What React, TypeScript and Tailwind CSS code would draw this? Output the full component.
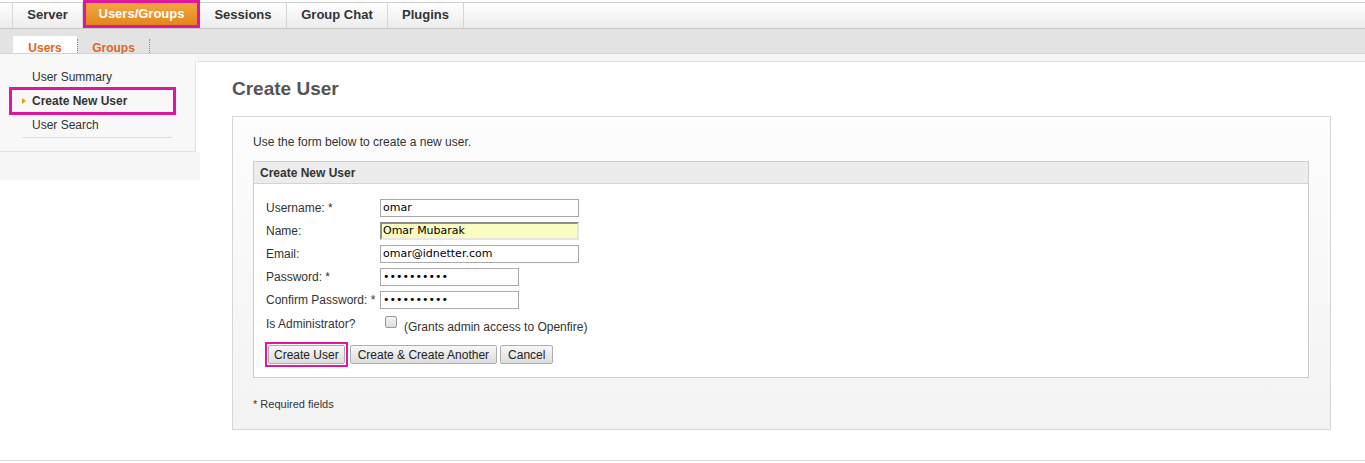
import React from 'react';

const navTabs = [
    { label: 'Server', w: 'w-[70px]' },
    { label: 'Users/Groups', w: 'w-[117px]', active: true },
    { label: 'Sessions', w: 'w-[87px]' },
    { label: 'Group Chat', w: 'w-[101px]' },
    { label: 'Plugins', w: 'w-[76px]' },
];

const FormRow: React.FC<{ label: string; children: React.ReactNode }> = ({ label, children }) => (
    <div className="flex items-center h-[23px]">
        <div className="w-[114px] text-[12px] text-[#333]">{label}</div>
        {children}
    </div>
);

const TextBox: React.FC<{ value: string; w: string; type?: string }> = ({ value, w, type = 'text' }) => (
    <input
        type={type}
        defaultValue={value}
        readOnly
        className={`${w} h-[18px] border border-[#a9a9a9] bg-white px-[2px] text-[11px] text-black outline-none`}
        style={{ fontFamily: '"DejaVu Sans", Verdana, sans-serif' }}
    />
);

const btn = 'h-[19px] text-[12px] text-[#222] border border-[#adadad] rounded-[2px] bg-gradient-to-b from-[#f7f7f7] to-[#dddddd]';

export default function App() {
    return (
        <div className="w-[1365px] h-[463px] bg-white text-[#333] overflow-hidden" style={{ fontFamily: '"Liberation Sans", Arial, sans-serif' }}>
            {/* Main tabs */}
            <div className="flex h-[29px] border-b border-[#c8c8c8]">
                <div className="w-[13px] mt-[2px] border-t border-r border-t-[#cfcfcf] border-r-[#d6d6d6] bg-gradient-to-b from-white to-[#ececec]"></div>
                {navTabs.map((t) =>
                    t.active ? (
                        <div
                            key={t.label}
                            className={`${t.w} h-[28px] flex items-center justify-center border-[3px] border-[#e0179d] bg-gradient-to-b from-[#f3a640] to-[#e2861a] text-white font-bold text-[13px]`}
                        >
                            {t.label}
                        </div>
                    ) : (
                        <div
                            key={t.label}
                            className={`${t.w} mt-[2px] pb-[1px] flex items-center justify-center border-t border-r border-t-[#cfcfcf] border-r-[#d6d6d6] bg-gradient-to-b from-white to-[#ececec] font-bold text-[13px] text-[#333]`}
                        >
                            {t.label}
                        </div>
                    )
                )}
                <div className="flex-1 mt-[2px] border-t border-[#cfcfcf] bg-gradient-to-b from-white to-[#ececec]"></div>
            </div>

            {/* Sub tabs */}
            <div className="flex items-end h-[25px] bg-[#e3e3e3] border-b border-[#d4d4d4] pl-[13px]">
                <div className="w-[64px] h-[17px] bg-white flex items-center justify-center pt-[6px] text-[12px] font-bold text-[#e0661c]">Users</div>
                <div className="w-[73px] h-[14px] flex items-center justify-center pt-[3px] text-[12px] font-bold text-[#e0661c] border-l border-r border-dotted border-[#8a8a8a]">Groups</div>
            </div>

            <div className="flex">
                {/* Sidebar */}
                <div className="w-[200px] flex flex-col">
                    <div className="w-[196px] h-[98px] bg-[#f8f8f8] border-r border-b border-[#e2e2e2] pt-[11px] text-[12px]">
                        <div className="h-[24px] flex items-center pl-[32px] text-[#333]">User Summary</div>
                        <div className="ml-[9px] w-[167px] h-[28px] -my-[2px] border-[3px] border-[#e0179d] flex items-center pl-[10px] font-bold text-[#333]">
                            <span className="w-0 h-0 border-t-[3px] border-b-[3px] border-l-[4px] border-t-transparent border-b-transparent border-l-[#e5a000] mr-[6px]"></span>
                            Create New User
                        </div>
                        <div className="h-[24px] flex items-center pl-[32px] text-[#333]">User Search</div>
                        <div className="ml-[22px] w-[150px] border-t border-[#dedede]"></div>
                    </div>
                    <div className="w-[200px] h-[28px] bg-[#f7f7f7]"></div>
                </div>

                {/* Main content */}
                <div className="flex-1 flex flex-col">
                    <div className="h-[7px] bg-[#f6f6f6] -ml-[5px]"></div>
                    <div className="flex-1 border-t border-[#e0e0e0] -ml-[3px] pl-[35px] pr-[34px] pt-[16px]">
                        <h1 className="text-[19px] font-bold text-[#555] leading-[22px]">Create User</h1>

                        <div className="mt-[16px] border border-[#d6d6d6] bg-gradient-to-b from-[#fdfdfd] to-[#f3f3f3] pt-[18px] pl-[20px] pr-[21px] pb-[18px]">
                            <p className="text-[12px] text-[#333] leading-[14px]">Use the form below to create a new user.</p>

                            <div className="mt-[12px] border border-[#cccccc] bg-white">
                                <div className="h-[22px] bg-[#ececec] border-b border-[#d4d4d4] flex items-center pl-[6px] text-[12px] font-bold text-[#333]">Create New User</div>
                                <div className="pt-[12px] pl-[12px] pb-[10px]">
                                    <FormRow label="Username: *">
                                        <TextBox value="omar" w="w-[199px]" />
                                    </FormRow>
                                    <FormRow label="Name:">
                                        <input
                                            type="text"
                                            defaultValue="Omar Mubarak"
                                            readOnly
                                            className="w-[199px] h-[18px] border-2 border-t-[#8d8d8d] border-l-[#8d8d8d] border-r-[#e6e6e6] border-b-[#e6e6e6] bg-[#fafcc0] px-[1px] text-[11px] text-black outline-none"
                                            style={{ fontFamily: '"DejaVu Sans", Verdana, sans-serif' }}
                                        />
                                    </FormRow>
                                    <FormRow label="Email:">
                                        <TextBox value="omar@idnetter.com" w="w-[199px]" />
                                    </FormRow>
                                    <FormRow label="Password: *">
                                        <TextBox value="1234567890" w="w-[139px]" type="password" />
                                    </FormRow>
                                    <FormRow label="Confirm Password: *">
                                        <TextBox value="1234567890" w="w-[139px]" type="password" />
                                    </FormRow>
                                    <div className="flex items-start h-[27px] pt-[4px]">
                                        <div className="w-[114px] text-[12px] text-[#333]">Is Administrator?</div>
                                        <span className="mt-[1px] ml-[5px] w-[12px] h-[12px] rounded-[2px] border border-[#9a9a9a] bg-gradient-to-b from-[#f4f4f4] to-[#dcdcdc]"></span>
                                        <span className="ml-[7px] mt-[3px] text-[12px] text-[#333]">(Grants admin access to Openfire)</span>
                                    </div>
                                    <div className="flex items-center gap-[3px] pt-[4px] -ml-[1px]">
                                        <span className="border-2 border-[#e0179d] p-[1px] -mr-[1px] flex">
                                            <button className={`${btn} px-[5px]`}>Create User</button>
                                        </span>
                                        <button className={`${btn} px-[7px]`}>Create &amp; Create Another</button>
                                        <button className={`${btn} px-[7px]`}>Cancel</button>
                                    </div>
                                </div>
                            </div>

                            <p className="mt-[20px] text-[11px] text-[#333] leading-[13px]">* Required fields</p>
                        </div>
                    </div>
                </div>
            </div>
            <div className="mt-[30px] border-t border-[#dcdcdc]"></div>
        </div>
    );
}
